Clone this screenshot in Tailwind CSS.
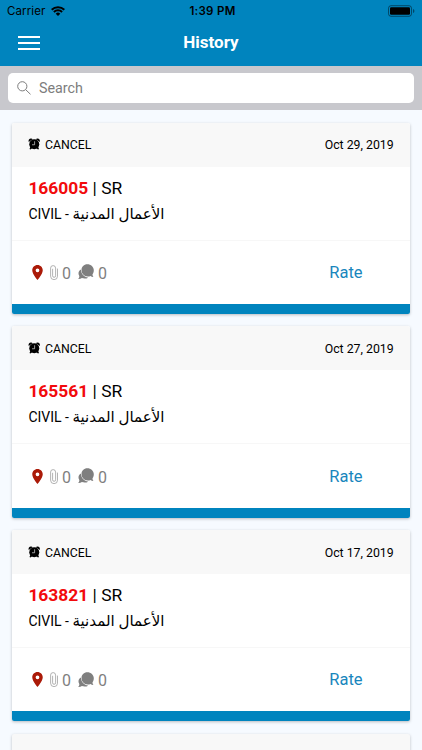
<!DOCTYPE html>
<html lang="en">
<head>
    <meta charset="UTF-8">
    <meta name="viewport" content="width=device-width, initial-scale=1.0">
    <title>History</title>
    <script src="https://cdn.jsdelivr.net/npm/@tailwindcss/browser@4"></script>
</head>
<body class="bg-[#f6faff] font-['Roboto','DejaVu_Sans',sans-serif] text-black h-screen overflow-hidden flex flex-col">
    <!-- Icons -->
    <svg class="hidden">
        <symbol id="alarm" viewBox="0 0 24 24">
            <circle cx="12" cy="12.500" r="10"/>
            <path d="M1 8C-.5 4.500 2.500.8 6 1.200c1.200.2 2 .6 2.600 1.200zM23 8c1.500-3.500-1.500-7.200-5-6.800-1.200.2-2 .6-2.600 1.200z"/>
            <path d="M4.500 17l-2 5 2 1.200 4-3zM19.500 17l2 5-2 1.200-4-3z"/>
            <path d="M12.700 6.500v7H7.500" fill="none" stroke="#f8f8f8" stroke-width="1.200"/>
        </symbol>
        <symbol id="pin" viewBox="0 0 14 20">
            <path d="M7 0C3.100 0 0 3.100 0 7c0 5.200 7 13 7 13s7-7.800 7-13c0-3.900-3.100-7-7-7zm0 9.500a2.500 2.500 0 1 1 0-5 2.500 2.500 0 0 1 0 5z"/>
        </symbol>
        <symbol id="clip" viewBox="0 0 8 15">
            <path d="M7.500 4v7.200a3.400 3.400 0 0 1-6.900 0V3.100a2.500 2.500 0 0 1 5 0v7.700a1.500 1.500 0 0 1-3 0V4.200" fill="none" stroke="currentColor" stroke-width=".7" stroke-linecap="round"/>
        </symbol>
        <symbol id="chat" viewBox="0 0 16 16">
            <path d="M2.900 5.600C1.200 6.600.500 8 .500 9.600c0 1 .3 1.800.8 2.500.2 1-.3 2.100-1.100 3 1.500.1 2.700-.3 3.700-1 2.200.8 4.500.6 6.300-.4C6.300 13.400 3 10 2.900 5.600z"/>
            <path d="M9.300.300C6 .300 3.500 2.800 3.500 6.100s2.600 6.500 6.200 6.500c1.100 0 2-.200 2.800-.6.800.6 1.700.9 2.900.9-.7-.8-1-1.700-.9-2.600.8-1 1.300-2.400 1.300-4C15.800 3 13 .300 9.300.300z"/>
        </symbol>
    </svg>

    <!-- Header -->
    <header class="bg-[#0084be] h-[66px] shrink-0">
        <div class="h-[23px] px-[7px] grid grid-cols-3 items-center font-['Inter',sans-serif] text-[11.5px]">
            <div class="flex items-center gap-[6px]">
                <span class="tracking-[0.1px]">Carrier</span>
                <svg class="w-[14px] h-[10px] -mt-[1px]" viewBox="0 0 14 10" fill="none" stroke="black" stroke-width="2">
                    <path d="M.7 3.700a9 9 0 0 1 12.600 0M2.900 6a5.800 5.800 0 0 1 8.200 0"/>
                    <path d="M7 10L4.700 7.700a3.300 3.300 0 0 1 4.600 0z" fill="black" stroke="none"/>
                </svg>
            </div>
            <div class="text-center font-semibold tracking-[0.3px] pl-[3px]">1:39 PM</div>
            <div class="flex justify-end -mt-[2px]">
                <svg class="w-[27px] h-[12px]" viewBox="0 0 27 12">
                    <rect x=".5" y=".7" width="23" height="10.600" rx="2.500" fill="none" stroke="black" stroke-opacity=".45"/>
                    <rect x="2" y="2.200" width="20" height="7.600" rx="1.200"/>
                    <path d="M25 4v4c.8-.3 1.400-1.100 1.400-2S25.800 4.300 25 4z" fill-opacity=".45"/>
                </svg>
            </div>
        </div>
        <div class="h-[39px] px-[18px] grid grid-cols-[22px_1fr_22px] items-center">
            <button class="flex flex-col gap-[4px]" aria-label="Menu">
                <span class="block h-[2px] w-[22px] bg-white"></span>
                <span class="block h-[2px] w-[22px] bg-white"></span>
                <span class="block h-[2px] w-[22px] bg-white"></span>
            </button>
            <h1 class="text-center text-white text-[17px] font-bold">History</h1>
        </div>
    </header>

    <!-- Search -->
    <div class="bg-[#c8c8cd] h-[44px] shrink-0 px-[8px] pt-[6.500px]">
        <div class="bg-white rounded-[5px] h-[30.500px] flex items-center pl-[9px] gap-[8px] text-[#7d7d7d]">
            <svg class="w-[14px] h-[14px]" viewBox="0 0 14 14" fill="none" stroke="currentColor" stroke-width="1">
                <circle cx="5.300" cy="5.300" r="4.600"/>
                <path d="M8.700 8.700l4.800 4.600"/>
            </svg>
            <span class="text-[14.300px] pt-[1px]">Search</span>
        </div>
    </div>

    <!-- Requests -->
    <main class="px-[12.400px] pt-[12.700px] flex flex-col gap-[12.300px]">
        <div class="h-[191.400px] shrink-0 rounded-[2px] overflow-hidden bg-white shadow-[0_1px_3px_rgba(0,0,0,0.25)] flex flex-col">
            <div class="bg-[#f8f8f8] h-[44px] shrink-0 px-4 flex items-center justify-between text-[12.300px]">
                <div class="flex items-center gap-[4px]">
                    <svg class="w-[12.500px] h-[12px] -mt-[1px]"><use href="#alarm"/></svg>
                    <span class="pt-[2px]">CANCEL</span>
                </div>
                <span class="pt-[2px]">Oct 29, 2019</span>
            </div>
            <div class="h-[74px] shrink-0 px-4 pt-[8px] border-b border-[#f7f7f7]">
                <p class="text-[17.400px] leading-[26px]"><b class="text-[#f20a0c]">166005</b> | SR</p>
                <p class="text-[14px] leading-[26px]">CIVIL - <bdi class="text-[15.100px]">الأعمال المدنية</bdi></p>
            </div>
            <div class="grow pl-[20px] pr-[47px] flex items-center justify-between">
                <div class="flex items-center text-[16px] text-[#7f7f7f]">
                    <svg class="w-[11px] h-[15px] mr-[6.500px] fill-[#ab1a08]"><use href="#pin"/></svg>
                    <svg class="w-[8px] h-[15px] mr-[4px] text-[#929292]"><use href="#clip"/></svg>
                    <span class="pt-[3px] mr-[7.500px]">0</span>
                    <svg class="w-[16px] h-[16px] mr-[3.500px] fill-[#7f7f7f]"><use href="#chat"/></svg>
                    <span class="pt-[3px]">0</span>
                </div>
                <a class="text-[16.500px] text-[#1886bd] pt-[2px]">Rate</a>
            </div>
            <div class="bg-[#0084be] h-[10px] shrink-0"></div>
        </div>

        <div class="h-[191.400px] shrink-0 rounded-[2px] overflow-hidden bg-white shadow-[0_1px_3px_rgba(0,0,0,0.25)] flex flex-col">
            <div class="bg-[#f8f8f8] h-[44px] shrink-0 px-4 flex items-center justify-between text-[12.300px]">
                <div class="flex items-center gap-[4px]">
                    <svg class="w-[12.500px] h-[12px] -mt-[1px]"><use href="#alarm"/></svg>
                    <span class="pt-[2px]">CANCEL</span>
                </div>
                <span class="pt-[2px]">Oct 27, 2019</span>
            </div>
            <div class="h-[74px] shrink-0 px-4 pt-[8px] border-b border-[#f7f7f7]">
                <p class="text-[17.400px] leading-[26px]"><b class="text-[#f20a0c]">165561</b> | SR</p>
                <p class="text-[14px] leading-[26px]">CIVIL - <bdi class="text-[15.100px]">الأعمال المدنية</bdi></p>
            </div>
            <div class="grow pl-[20px] pr-[47px] flex items-center justify-between">
                <div class="flex items-center text-[16px] text-[#7f7f7f]">
                    <svg class="w-[11px] h-[15px] mr-[6.500px] fill-[#ab1a08]"><use href="#pin"/></svg>
                    <svg class="w-[8px] h-[15px] mr-[4px] text-[#929292]"><use href="#clip"/></svg>
                    <span class="pt-[3px] mr-[7.500px]">0</span>
                    <svg class="w-[16px] h-[16px] mr-[3.500px] fill-[#7f7f7f]"><use href="#chat"/></svg>
                    <span class="pt-[3px]">0</span>
                </div>
                <a class="text-[16.500px] text-[#1886bd] pt-[2px]">Rate</a>
            </div>
            <div class="bg-[#0084be] h-[10px] shrink-0"></div>
        </div>

        <div class="h-[191.400px] shrink-0 rounded-[2px] overflow-hidden bg-white shadow-[0_1px_3px_rgba(0,0,0,0.25)] flex flex-col">
            <div class="bg-[#f8f8f8] h-[44px] shrink-0 px-4 flex items-center justify-between text-[12.300px]">
                <div class="flex items-center gap-[4px]">
                    <svg class="w-[12.500px] h-[12px] -mt-[1px]"><use href="#alarm"/></svg>
                    <span class="pt-[2px]">CANCEL</span>
                </div>
                <span class="pt-[2px]">Oct 17, 2019</span>
            </div>
            <div class="h-[74px] shrink-0 px-4 pt-[8px] border-b border-[#f7f7f7]">
                <p class="text-[17.400px] leading-[26px]"><b class="text-[#f20a0c]">163821</b> | SR</p>
                <p class="text-[14px] leading-[26px]">CIVIL - <bdi class="text-[15.100px]">الأعمال المدنية</bdi></p>
            </div>
            <div class="grow pl-[20px] pr-[47px] flex items-center justify-between">
                <div class="flex items-center text-[16px] text-[#7f7f7f]">
                    <svg class="w-[11px] h-[15px] mr-[6.500px] fill-[#ab1a08]"><use href="#pin"/></svg>
                    <svg class="w-[8px] h-[15px] mr-[4px] text-[#929292]"><use href="#clip"/></svg>
                    <span class="pt-[3px] mr-[7.500px]">0</span>
                    <svg class="w-[16px] h-[16px] mr-[3.500px] fill-[#7f7f7f]"><use href="#chat"/></svg>
                    <span class="pt-[3px]">0</span>
                </div>
                <a class="text-[16.500px] text-[#1886bd] pt-[2px]">Rate</a>
            </div>
            <div class="bg-[#0084be] h-[10px] shrink-0"></div>
        </div>

        <div class="h-[44px] shrink-0 rounded-t-[2px] bg-[#f8f8f8] shadow-[0_1px_3px_rgba(0,0,0,0.25)]"></div>
    </main>
</body>
</html>
